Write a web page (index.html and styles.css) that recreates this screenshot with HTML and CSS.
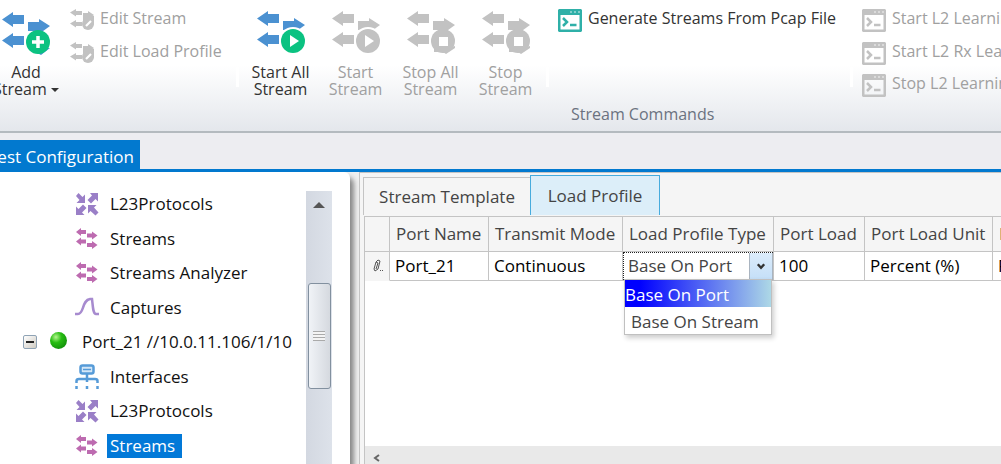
FILE: index.html
```html
<!DOCTYPE html>
<html lang="en">
<head>
<meta charset="utf-8">
<title>Test Configuration</title>
<link rel="stylesheet" href="styles.css">
</head>
<body>
<svg class="defs" aria-hidden="true">
  <defs>
    <path id="arrow-left" d="M0 7.500 11 0V3H22V12H11V15Z"/>
    <g id="streams-big">
      <use href="#arrow-left" x="0" y="0"/>
      <use href="#arrow-left" x="0" y="21"/>
      <path d="M26 10H37V7L48 14 37 22V19H26Z"/>
    </g>
    <g id="edit-stream">
      <path d="M0 3.500 6 0V2H12V6H6V7.500ZM0 14.500 6 11V13H12V17H6V18.500ZM13 4H18V2L24 6 18 9H13Z"/>
      <circle cx="18" cy="15" r="6"/>
      <path d="M13 5H20L24 7V16L20 12H13Z"/>
      <path d="M16 17 21 12" stroke="#fff" stroke-width="2.200"/>
    </g>
    <g id="console">
      <path fill="currentColor" fill-rule="evenodd" d="M1 0H23L24 1V22L23 23H1L0 22V1ZM2.500 6V20.500H21.500V6Z"/>
      <path stroke="currentColor" fill="none" stroke-width="2.500" d="M5 9 9 13 5 17M12 16H18.500"/>
      <path stroke="#fff" stroke-opacity=".4" stroke-width="2" stroke-dasharray="2 2" d="M12 3H22"/>
    </g>
    <g id="protocols" fill="#9a7fc7">
      <path d="M2.500 0 6.500 4 9 1.500V10H.5L3.500 7 0 3Z"/>
      <path d="M14 0H22V8.500L19.500 6 15 10.500 11.500 7 16 2.500Z"/>
      <path d="M0 22V13.500L2.500 16 7 11.500 10.500 15 6 19.500 8.500 22Z"/>
      <path d="M12 12H20.500L18 14.500 22.500 19.500 19.500 22.500 14.500 18 12 20.500Z"/>
    </g>
    <g id="streams" fill="#bd6bb0">
      <path d="M0 4 5 0V2H10V6H5V8ZM11 5.500H16V3.500L21.500 7.500 16 11.500V9.500H11ZM0 13.500 5 9.500V11.500H10V15.500H5V17.500ZM11 15H16V13L21.500 17 16 21V19H11Z"/>
    </g>
  </defs>
</svg>

<header class="ribbon">
  <section class="group group-edit">
    <button class="big add" type="button">
      <svg width="48" height="44" viewBox="0 0 48 44"><use href="#streams-big" fill="#4b91d1"/><path fill="#4b91d1" d="M26 36 39 43 48 36Z"/><circle cx="36" cy="30" r="12" fill="#0bc281"/><path stroke="#fff" stroke-width="3.500" d="M30 30H42M36 24V36"/></svg>
      <span>Add<br>Stream <i class="caret"></i></span>
    </button>
    <div class="stack">
      <button class="small" type="button" disabled><svg width="24" height="22" viewBox="0 0 24 22"><use href="#edit-stream" fill="#c2c2c2"/></svg>Edit Stream</button>
      <button class="small" type="button" disabled><svg width="24" height="22" viewBox="0 0 24 22"><use href="#edit-stream" fill="#c2c2c2"/></svg>Edit Load Profile</button>
    </div>
  </section>
  <i class="sep"></i>
  <section class="group group-commands">
    <div class="commands">
      <button class="big" type="button">
        <svg width="48" height="44" viewBox="0 0 48 44"><use href="#streams-big" fill="#4b91d1"/><circle cx="36" cy="30" r="14" fill="#fff"/><circle cx="36" cy="30" r="12" fill="#0bc281"/><path fill="#fff" d="M33 24 42 30 33 36Z"/></svg>
        <span>Start All<br>Stream</span>
      </button>
      <button class="big" type="button" disabled>
        <svg width="48" height="44" viewBox="0 0 48 44"><use href="#streams-big" fill="#c2c2c2"/><circle cx="36" cy="30" r="14" fill="#fff"/><circle cx="36" cy="30" r="12" fill="#c2c2c2"/><path fill="#fff" d="M33 24 42 30 33 36Z"/></svg>
        <span>Start<br>Stream</span>
      </button>
      <button class="big" type="button" disabled>
        <svg width="48" height="44" viewBox="0 0 48 44"><g fill="#c2c2c2"><use href="#streams-big"/><circle cx="36" cy="30" r="12"/><path d="M27 36H45L48 35V37L39 43 36 41H27Z"/></g><path fill="#fff" d="M32 26H41V35H32Z"/></svg>
        <span>Stop All<br>Stream</span>
      </button>
      <button class="big" type="button" disabled>
        <svg width="48" height="44" viewBox="0 0 48 44"><g fill="#c2c2c2"><use href="#streams-big"/><circle cx="36" cy="30" r="12"/><path d="M27 36H45L48 35V37L39 43 36 41H27Z"/></g><path fill="#fff" d="M32 26H41V35H32Z"/></svg>
        <span>Stop<br>Stream</span>
      </button>
      <i class="sep sep-inner"></i>
      <div class="stack pcap">
        <button class="small" type="button"><svg class="teal" width="24" height="23" viewBox="0 0 24 23"><use href="#console"/></svg>Generate Streams From Pcap File</button>
      </div>
      <i class="sep"></i>
      <div class="stack learning">
        <button class="small" type="button" disabled><svg width="24" height="23" viewBox="0 0 24 23"><use href="#console"/></svg>Start L2 Learning</button>
        <button class="small" type="button" disabled><svg width="24" height="23" viewBox="0 0 24 23"><use href="#console"/></svg>Start L2 Rx Learning</button>
        <button class="small" type="button" disabled><svg width="24" height="23" viewBox="0 0 24 23"><use href="#console"/></svg>Stop L2 Learning</button>
      </div>
    </div>
    <h2 class="caption">Stream Commands</h2>
  </section>
</header>

<nav class="docs"><button class="doc-tab" type="button">Test Configuration</button></nav>

<main class="work">
  <aside class="tree">
    <ul class="nodes">
      <li class="leaf"><svg width="24" height="24" viewBox="-1 -1 24 24"><use href="#protocols"/></svg><span>L23Protocols</span></li>
      <li class="leaf"><svg width="24" height="24" viewBox="-1 -1 24 24"><use href="#streams"/></svg><span>Streams</span></li>
      <li class="leaf"><svg width="24" height="24" viewBox="-1 -1 24 24"><use href="#streams"/></svg><span>Streams Analyzer</span></li>
      <li class="leaf"><svg width="24" height="24" viewBox="0 0 24 24"><path fill="none" stroke="#a78bcf" stroke-width="2.500" d="M0 18H3C9 18 7 4 15 3H17C18 11 18 18 21 18H24"/></svg><span>Captures</span></li>
      <li class="port">
        <button class="toggle" type="button" aria-label="Collapse Port_21"></button>
        <i class="led"></i><span>Port_21 //10.0.11.106/1/10</span>
      </li>
      <li class="leaf"><svg width="24" height="26" viewBox="0 0 24 26"><g fill="none" stroke="#569bd8" stroke-width="2.500"><rect x="5.500" y="1.500" width="13" height="8" rx="2" fill="#d4e7f7"/><path d="M8 5.500H16" stroke-width="1.500"/><path d="M12 10V18M1.500 19V17Q1.500 15 4 15H20Q22.500 15 22.500 17V19"/><path d="M1.500 22V25M12 22V25M22.500 22V25"/></g></svg><span>Interfaces</span></li>
      <li class="leaf"><svg width="24" height="24" viewBox="-1 -1 24 24"><use href="#protocols"/></svg><span>L23Protocols</span></li>
      <li class="leaf selected"><svg width="24" height="24" viewBox="-1 -1 24 24"><use href="#streams"/></svg><span>Streams</span></li>
    </ul>
    <div class="vscroll">
      <i class="up"></i>
      <div class="thumb"><i class="grip"></i></div>
    </div>
  </aside>

  <section class="detail">
    <div class="tabs" role="tablist">
      <button class="tab" type="button" role="tab">Stream Template</button>
      <button class="tab active" type="button" role="tab" aria-selected="true">Load Profile</button>
    </div>
    <div class="grid">
      <table>
        <colgroup><col class="c-mark"><col class="c-name"><col class="c-mode"><col class="c-type"><col class="c-load"><col class="c-unit"><col class="c-rest"></colgroup>
        <thead>
          <tr><th></th><th>Port Name</th><th>Transmit Mode</th><th><label for="type">Load Profile Type</label></th><th>Port Load</th><th>Port Load Unit</th><th>L</th></tr>
        </thead>
        <tbody>
          <tr>
            <td class="mark"><svg width="10" height="14" viewBox="0 0 10 14"><path fill="none" stroke="#555" d="M3 3 5 1 7 2 5 10 2 12 1 10ZM3 3 5 4 3 10M7 11.500H8M9 11.500H10"/></svg></td>
            <td>Port_21</td><td>Continuous</td>
            <td class="editing">
              <div class="combo">
                <select id="type"><option>Base On Port</option><option>Base On Stream</option></select>
                <svg class="drop" width="24" height="27" viewBox="0 0 24 27"><path fill="none" stroke="#333" stroke-width="2.500" d="M8.500 11 12 15 15.500 11"/></svg>
                <ul class="menu"><li class="on">Base On Port</li><li>Base On Stream</li></ul>
              </div>
            </td>
            <td>100</td><td>Percent (%)</td><td>F</td>
          </tr>
        </tbody>
      </table>
      <div class="hscroll"><svg width="8" height="10" viewBox="0 0 8 10"><path fill="none" stroke="#666" stroke-width="2" d="M6 2 2 5 6 8"/></svg></div>
    </div>
  </section>
</main>
</body>
</html>
```
FILE: styles.css
```css
* { box-sizing: border-box; }

body {
  margin: 0;
  height: 100vh;
  display: flex;
  flex-direction: column;
  overflow: hidden;
  background: #ededf1;
  color: #111;
  font: 17px/24px "Open Sans", "Noto Sans", sans-serif;
}

ul { list-style: none; margin: 0; padding: 0; }
button, select { font: inherit; color: inherit; border: 0; background: none; padding: 0; margin: 0; }
.defs { position: absolute; width: 0; height: 0; }

/* Ribbon */
.ribbon {
  flex: none;
  display: flex;
  border-bottom: 2px solid #b4babf;
  background: linear-gradient(#fff 50%, #e4e7ec);
  color: #333;
  font-size: 16px;
  overflow: hidden;
}
.group { flex: none; display: flex; }
.group-edit { width: 236px; }
.group-commands { flex-direction: column; padding-left: 4px; }
.sep { flex: none; width: 3px; height: 20px; margin-top: 67px; background: #fff; }
.sep-inner { margin-left: 3px; }
.commands { display: flex; height: 101px; }
.big {
  flex: none;
  width: 75px;
  display: flex;
  flex-direction: column;
  align-items: center;
  gap: 9px;
  padding-top: 11px;
  line-height: 17px;
  white-space: nowrap;
}
.add { width: 64px; margin-left: -6px; margin-right: 12px; padding-top: 12px; gap: 8px; }
.big:disabled, .small:disabled { color: #a0a0a0; }
.caret { display: inline-block; border: 4px solid transparent; border-top-color: #333; border-bottom: 0; vertical-align: 3px; }
.stack { display: flex; flex-direction: column; padding-top: 3px; }
.small { display: flex; align-items: flex-start; gap: 6px; height: 33px; white-space: nowrap; line-height: 30px; }
.small svg { flex: none; margin-top: 6px; color: #c2c2c2; }
.small .teal { color: #2fb0a8; }
.pcap { width: 301px; padding-left: 9px; }
.learning { width: 180px; padding-left: 9px; }
.caption { margin: 0; padding-left: 328px; font-size: 16px; font-weight: 400; line-height: 26px; height: 30px; color: #6b7280; }

/* Document tabs */
.docs { flex: none; display: flex; padding-top: 7px; border-bottom: 3px solid #0279cf; }
.doc-tab { margin-left: -12px; padding: 5px 6px 0 0; background: #0279cf; color: #fff; }

/* Work area */
.work { flex: 1; min-height: 0; display: flex; background: #f0f0f0; }
.tree {
  flex: none;
  width: 350px;
  display: flex;
  justify-content: space-between;
  padding: 15px 18px 0 22px;
  background: #fff;
  border-top-right-radius: 6px;
  box-shadow: 3px 6px 5px 1px #888;
}
.nodes li { display: flex; align-items: center; height: 34px; white-space: nowrap; }
.nodes li:nth-child(even) { height: 35px; }
.leaf { padding-left: 53px; gap: 8px; }
.leaf span { padding: 0 3px; }
.leaf.selected span { padding-right: 7px; background: #0279d8; color: #fff; }
.port { padding-left: 1px; }
.toggle {
  width: 14px; height: 14px; margin-right: 13px;
  border: 1px solid #8fa3b5; border-radius: 2px;
  background: linear-gradient(#222, #222) center / 8px 2px no-repeat, linear-gradient(135deg, #fff, #cfcbc2);
}
.led { width: 17px; height: 17px; margin-right: 15px; margin-bottom: 4px; border-radius: 50%; background: radial-gradient(circle at 35% 30%, #b5f58f, #27bd12 35%, #087a08); }
.vscroll { width: 26px; margin-top: 4px; display: flex; flex-direction: column; align-items: center; background: linear-gradient(90deg, #d3d8e1, #dde2ea); }
.up { margin-top: 11px; border: 6px solid transparent; border-bottom-color: #555; border-top: 0; }
.thumb {
  width: 23px; height: 106px; margin-top: 75px;
  display: flex; align-items: center; justify-content: center;
  border: 1px solid #82909f; border-radius: 3px;
  background: linear-gradient(90deg, #f0f3f7, #d5d9df);
}
.grip { width: 12px; height: 10px; background: repeating-linear-gradient(#aaa 0 1px, #f4f4f4 1px 3px); }

/* Detail pane */
.detail {
  flex: 1;
  min-width: 0;
  display: flex;
  flex-direction: column;
  margin-left: 9px;
  padding: 2px 0 0 3px;
  border: solid #c4c4c4;
  border-width: 1px 0 0 1px;
  background: #f5f5f5;
  color: #444;
  z-index: 1;
}
.tabs { flex: none; display: flex; align-items: flex-end; height: 40px; }
.tab { height: 38px; width: 167px; border: 1px solid #c4c4c4; border-width: 1px 0 0 1px; }
.tab.active { height: 40px; width: 130px; border: 1px solid #47abdd; border-bottom: 0; background: #dceef9; }
.grid { flex: 1; min-height: 0; display: flex; flex-direction: column; margin: 1px 0 0 1px; border: solid #c4c4c4; border-width: 1px 0 0 1px; background: #fff; }
table { width: 100%; min-width: 668px; table-layout: fixed; border-collapse: separate; border-spacing: 0; }
.c-mark { width: 25px; }
.c-name { width: 99px; }
.c-mode { width: 134px; }
.c-type { width: 151px; }
.c-load { width: 91px; }
.c-unit { width: 128px; }
th, td { padding: 0 0 0 6px; text-align: left; font-weight: 400; white-space: nowrap; border: solid #c4c4c4; border-width: 0 1px 1px 0; }
th { height: 35px; background: #f5f5f5; }
td { height: 29px; color: #000; padding-left: 5px; }
td.mark { padding: 0 0 0 8px; background: #f5f5f5; border-bottom-color: #f5f5f5; }
.mark svg, .drop { display: block; }
td.editing { padding: 0; }
.combo { position: relative; display: flex; height: 28px; border: 1px dotted #222; border-width: 1px 0 0 1px; color: #444; }
.combo select { flex: 1; min-width: 0; appearance: none; padding: 0 0 2px 4px; outline: 0; }
.drop { border: 1px solid #a9b4c0; border-width: 0 1px 0 1px; background: linear-gradient(#dcecfb, #c4dff8); }
.menu { position: absolute; z-index: 2; top: 26px; left: 0; right: 1px; border: 1px solid #c0c0c0; background: #fff; box-shadow: 2px 3px 5px #0003; }
.menu li { height: 27px; line-height: 29px; padding-left: 6px; }
.menu .on { padding-left: 0; background: linear-gradient(90deg, #00f 10%, #add8e6); color: #fff; }
.hscroll { margin-top: auto; height: 18px; display: flex; align-items: center; padding: 6px 0 0 8px; background: #e9e9e9; }
```
